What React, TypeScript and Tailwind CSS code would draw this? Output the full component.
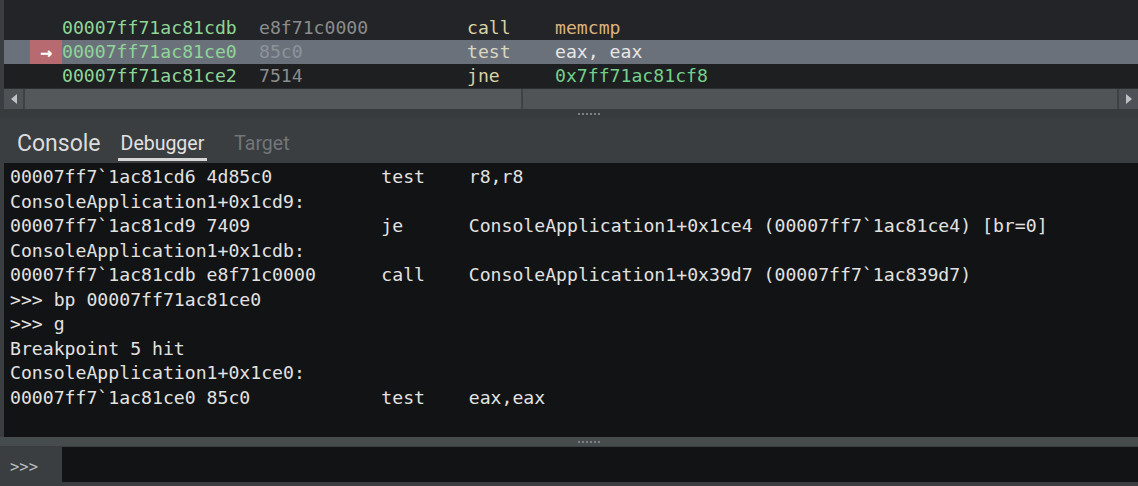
import React from "react";

const mono = { fontFamily: '"DejaVu Sans Mono", "Liberation Mono", monospace' };

type Row = { addr: string; bytes: string; op: string; args: string; argColor: string; opColor: string; current?: boolean };

const rows: Row[] = [
  { addr: "00007ff71ac81cdb", bytes: "e8f71c0000", op: "call", args: "memcmp", opColor: "text-[#d9d2a6]", argColor: "text-[#dcb27c]" },
  { addr: "00007ff71ac81ce0", bytes: "85c0", op: "test", args: "eax, eax", opColor: "text-[#dad6bf]", argColor: "text-[#e6e6e6]", current: true },
  { addr: "00007ff71ac81ce2", bytes: "7514", op: "jne", args: "0x7ff71ac81cf8", opColor: "text-[#d9d2a6]", argColor: "text-[#74cf8a]" },
];

const pad = (s: string, n: number) => s + " ".repeat(Math.max(1, n - s.length));
const asm = (a: string, op: string, args: string) => pad(a, 34) + pad(op, 8) + args;

const lines = [
  asm("00007ff7`1ac81cd6 4d85c0", "test", "r8,r8"),
  "ConsoleApplication1+0x1cd9:",
  asm("00007ff7`1ac81cd9 7409", "je", "ConsoleApplication1+0x1ce4 (00007ff7`1ac81ce4) [br=0]"),
  "ConsoleApplication1+0x1cdb:",
  asm("00007ff7`1ac81cdb e8f71c0000", "call", "ConsoleApplication1+0x39d7 (00007ff7`1ac839d7)"),
  ">>> bp 00007ff71ac81ce0",
  ">>> g",
  "Breakpoint 5 hit",
  "ConsoleApplication1+0x1ce0:",
  asm("00007ff7`1ac81ce0 85c0", "test", "eax,eax"),
];

function Grip() {
  return (
    <div className="flex gap-[2px]">
      {[0, 1, 2, 3, 4, 5].map((i) => (
        <div key={i} className="w-[2px] h-[2px] bg-[#7a7f84]" />
      ))}
    </div>
  );
}

export default function App() {
  return (
    <div className="w-[1138px] h-[486px] overflow-hidden bg-[#3a3e40] flex flex-col" style={{ fontFamily: "Roboto, sans-serif" }}>
      {/* Disassembly */}
      <div className="flex h-[109px] bg-[#3b3e41]">
        <div className="w-[4px]" />
        <div className="flex-1 flex flex-col bg-[#232427]">
          <div className="flex-1 pt-[16px] text-[18.15px] leading-[24px]" style={mono}>
            {rows.map((r) => (
              <div
                key={r.addr}
                className={`flex h-[24px] items-center whitespace-pre ${r.current ? "bg-[#6b717b]" : r.op === "jne" ? "bg-[#1d1f21]" : ""}`}
              >
                <div className="w-[58px] h-full flex items-center justify-end">
                  {r.current && (
                    <div className="w-[32px] h-full bg-[#b76b70] flex items-center justify-center text-white text-[20px] font-bold">
                      →
                    </div>
                  )}
                </div>
                <span className="w-[197px] text-[#8ed596]">{r.addr}</span>
                <span className={`w-[208px] ${r.current ? "text-[#8d939a]" : "text-[#8c8c8c]"}`}>{r.bytes}</span>
                <span className={`w-[88px] ${r.opColor}`}>{r.op}</span>
                <span className={r.argColor}>{r.args}</span>
              </div>
            ))}
          </div>
          {/* horizontal scrollbar */}
          <div className="h-[21px] flex bg-[#3f4245] gap-[2px] border-t border-[#2c2e30]">
            <div className="w-[19px] bg-[#4e5155] flex items-center justify-center">
              <div className="w-0 h-0 border-y-[5px] border-y-transparent border-r-[6px] border-r-[#bfc2c5]" />
            </div>
            <div className="w-[496px] bg-[#55585b]" />
            <div className="flex-1 bg-[#515457]" />
            <div className="w-[19px] bg-[#4e5155] flex items-center justify-center">
              <div className="w-0 h-0 border-y-[5px] border-y-transparent border-l-[6px] border-l-[#bfc2c5]" />
            </div>
          </div>
        </div>
      </div>

      {/* splitter */}
      <div className="h-[9px] bg-[#373b3d] flex items-center justify-center pl-[40px]">
        <Grip />
      </div>

      {/* tabs */}
      <div className="h-[45px] flex items-end pl-[17px] bg-[#3a3e40]">
        <div className="text-[23px] text-[#dcdcdc] pb-[4px] mr-[17px] leading-[30px]">Console</div>
        <div className="text-[19.5px] text-[#e2e2e2] px-[3px] pb-0 border-b-[3px] border-[#d6d6d6] mr-[27px] leading-[28px] mb-[2px]">Debugger</div>
        <div className="text-[19.5px] text-[#72767a] pb-[5px] leading-[28px]">Target</div>
      </div>

      {/* output */}
      <div className="flex h-[274px]">
        <div className="w-[4px] bg-[#3a3e40]" />
        <div
          className="flex-1 bg-[#121314] pl-[6px] pt-[2px] text-[18.15px] leading-[24.5px] text-[#e2e2e2] whitespace-pre"
          style={mono}
        >
          {lines.map((l, i) => (
            <div key={i}>{l}</div>
          ))}
        </div>
      </div>

      {/* splitter */}
      <div className="h-[9px] bg-[#464b4c] flex items-center justify-center pl-[40px]">
        <Grip />
      </div>

      {/* input */}
      <div className="flex-1 flex items-start pt-[1px]">
        <div className="w-[62px] h-[36px] flex items-center pl-[10px] text-[15.5px] text-[#b8bcbf] pt-[6px]" style={mono}>
          &gt;&gt;&gt;
        </div>
        <div className="flex-1 h-[35px] bg-[#121314]" />
      </div>
    </div>
  );
}
